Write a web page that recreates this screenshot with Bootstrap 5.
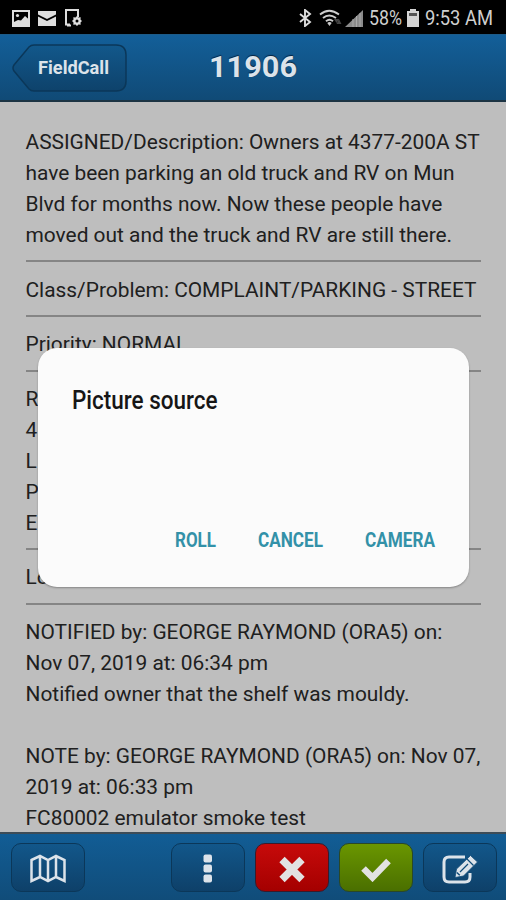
<!DOCTYPE html>
<html lang="en">
<head>
<meta charset="utf-8">
<meta name="viewport" content="width=device-width, initial-scale=1">
<title>11906</title>
<link href="https://cdn.jsdelivr.net/npm/bootstrap@5.3.0/dist/css/bootstrap.min.css" rel="stylesheet">
<style>
body{font-family:Roboto,"Liberation Sans",sans-serif;background:#bebebe;color:#202020}
.screen{height:900px;width:506px}
.status{height:34px;background:#000;color:#cfcfcf;font-size:18px;padding:2px 13px 0 12px}
.status svg{display:block;flex:none}
.fit{display:block;overflow:visible;flex:none}
.topbar{height:68px;background:linear-gradient(#135f99,#104a76);border-top:1px solid #1d5b88;border-bottom:2px solid #1c3443}
.heading{font-size:30px;font-weight:700;color:#dce3ea;text-shadow:0 -1px 1px #06223f}
.back{left:12px;top:9px;width:115px;height:48px}
.notes{padding:25.3px 25px 0 25.5px;font-size:20.9px;line-height:30.95px;overflow:hidden;min-height:0}
.entry{padding:0 0 9.4px;margin-bottom:12.3px;border-bottom:2px solid #858585}
.entry:last-child{border:0}
.entry div{white-space:nowrap;height:30.95px}
.toolbar{height:68px;background:linear-gradient(#125d95,#104c79);border-top:2px solid #3d4c57;padding:9px 9px 0 11px}
.key{width:74px;height:49px;border:1.5px solid #0b3759;border-radius:10px;background:linear-gradient(#12578a,#0e4069);padding:2px 0 0}
.key.red{background:linear-gradient(#c70a0a,#a40000);border-color:#3b1a2b}
.key.green{background:linear-gradient(#6a9600,#4a6f00);border-color:#2a4827}
.sheet{left:38px;top:348px;width:431px;height:239px;border-radius:19px;background:#fbfbfb;box-shadow:0 1px 2px rgba(0,0,0,.3);padding:37px 34px 34px}
.choice{font-size:20px;font-weight:700;fill:#3391a8}
</style>
<script src="https://cdn.jsdelivr.net/npm/bootstrap@5.3.0/dist/js/bootstrap.bundle.min.js"></script>
</head>
<body>
<div class="screen d-flex flex-column position-relative overflow-hidden">
<div class="status d-flex align-items-center justify-content-between flex-shrink-0">
  <div class="d-flex align-items-center">
    <svg width="18" height="17" viewBox="0 0 18 17"><rect x="1" y="1" width="16" height="15" fill="none" stroke="#ddd" stroke-width="2"/><circle cx="5.5" cy="5.5" r="1.6" fill="#ddd"/><path d="M2 12l4-2 3 .5 4-4.500 4 3.500V15H2z" fill="#ddd"/></svg>
    <svg class="ms-2" width="18" height="15" viewBox="0 0 18 15"><path d="M0 0h18v3.500L9 8 0 3.500zM0 5.500l9 4.500 9-4.500V15H0z" fill="#ddd"/></svg>
    <svg style="margin-left:9px" width="17" height="18" viewBox="0 0 17 18"><path d="M5 15.500H1V1h12v7" fill="none" stroke="#ddd" stroke-width="2"/><path d="M2 16.500h4" stroke="#ddd" stroke-width="2"/><path d="M12 7l1.500 1.500 2.200-.2-.2 2.200L17 12l-1.500 1.500.2 2.200-2.200-.2L12 17l-1.500-1.500-2.200.2.2-2.200L7 12l1.500-1.500-.2-2.200 2.200.2z" fill="#ddd"/><circle cx="12" cy="12" r="1.500" fill="#000"/></svg>
  </div>
  <div class="d-flex align-items-center">
    <svg width="13" height="18" viewBox="0 0 13 18"><path d="M1 5l10 8-5 4V1l5 4-10 8" fill="none" stroke="#ddd" stroke-width="1.900"/></svg>
    <svg style="margin-left:7px" width="24" height="18" viewBox="0 0 24 18"><g fill="none" stroke="#ccc" stroke-width="1.900"><path d="M1 5.500Q10-2 20 5.500M4 9q6-5 13 0M7 12.200q3.500-3 7 0"/></g><path d="M10.500 17l-2.200-3q2.200-1.800 4.400 0z" fill="#ccc"/><path d="M15 10l2.500 4L20 10zM17.500 15l2.500-5 2.500 5z" fill="#444"/></svg>
    <svg style="margin-left:2px" width="18" height="17" viewBox="0 0 18 17"><path d="M0 17L18 0v17z" fill="#8b8b8b"/><path d="M8 9v8M11.500 6v11M15 3v14" stroke="#aaa" stroke-width="1"/></svg>
    <svg class="fit" style="margin-left:6px" width="33" height="20"><text x="0" y="17" font-size="20" textLength="33" lengthAdjust="spacingAndGlyphs" fill="#cfcfcf">58%</text></svg>
    <svg style="margin-left:5px" width="12" height="18" viewBox="0 0 12 18"><path d="M3 0h6v2h3v16H0V2h3z" fill="#d4d4d4"/><path d="M2 4h8v3H2z" fill="#555"/></svg>
    <svg class="fit" style="margin-left:6px" width="68" height="20"><text x="0" y="17" font-size="20" textLength="68" lengthAdjust="spacingAndGlyphs" fill="#cfcfcf">9:53 AM</text></svg>
  </div>
</div>
<header class="topbar position-relative d-flex justify-content-center align-items-center flex-shrink-0">
  <svg class="back position-absolute" viewBox="0 0 115 48"><defs><linearGradient id="bk" x2="0" y2="1"><stop stop-color="#12588b"/><stop offset="1" stop-color="#0e426b"/></linearGradient></defs><path d="M22 1h82q10 0 10 10v26q0 10-10 10H22q-3 0-5-2L2 27q-2-3 0-6L17 3q2-2 5-2z" fill="url(#bk)" stroke="#0b3759" stroke-width="1.500"/><text x="26" y="30" font-size="18.500" font-weight="700" textLength="71" lengthAdjust="spacingAndGlyphs" fill="#dce3ea">FieldCall</text></svg>
  <svg class="fit heading" width="88" height="30"><text x="0" y="24" textLength="88" lengthAdjust="spacingAndGlyphs" fill="#dce3ea">11906</text></svg>
</header>
<main class="notes flex-grow-1">
  <div class="entry"><div>ASSIGNED/Description: Owners at 4377-200A ST</div><div>have been parking an old truck and RV on Mun</div><div>Blvd for months now. Now these people have</div><div>moved out and the truck and RV are still there.</div></div>
  <div class="entry"><div>Class/Problem: COMPLAINT/PARKING - STREET</div></div>
  <div class="entry"><div>Priority: NORMAL</div></div>
  <div class="entry"><div>R</div><div>4</div><div>L</div><div>P</div><div>E</div></div>
  <div class="entry"><div>Lo</div></div>
  <div class="entry"><div>NOTIFIED by: GEORGE RAYMOND (ORA5) on:</div><div>Nov 07, 2019 at: 06:34 pm</div><div>Notified owner that the shelf was mouldy.</div><div></div><div>NOTE by: GEORGE RAYMOND (ORA5) on: Nov 07,</div><div>2019 at: 06:33 pm</div><div>FC80002 emulator smoke test</div></div>
</main>
<footer class="toolbar d-flex justify-content-between align-items-start flex-shrink-0">
  <button class="key btn d-flex align-items-center justify-content-center" aria-label="Map"><svg width="36" height="29" viewBox="0 0 36 29"><path d="M1.500 6L10 2l8 4 8-4 8.500 4v21L26 23l-8 4-8-4-8.500 4zM10 2v21M18 6v21M26 2v21" fill="none" stroke="#dce3ea" stroke-width="2.500"/></svg></button>
  <div class="d-flex" style="gap:10px">
    <button class="key btn d-flex align-items-center justify-content-center" aria-label="More"><svg width="10" height="29" viewBox="0 0 10 29"><g fill="#dce3ea"><rect x=".5" y=".5" width="8.500" height="8" rx="2"/><rect x=".5" y="10.500" width="8.500" height="8" rx="2"/><rect x=".5" y="20.500" width="8.500" height="8" rx="2"/></g></svg></button>
    <button class="key red btn d-flex align-items-center justify-content-center" aria-label="Reject"><svg width="28" height="28" viewBox="0 0 28 28"><path d="M4 4.500l20 20M24 4.500L4 24.500" stroke="#e2e2e2" stroke-width="7.500"/></svg></button>
    <button class="key green btn d-flex align-items-center justify-content-center" aria-label="Accept"><svg width="32" height="26" viewBox="0 0 32 26"><path d="M3.500 12.500l9 9L28.500 5" fill="none" stroke="#e2e2e2" stroke-width="6.500"/></svg></button>
    <button class="key btn d-flex align-items-center justify-content-center" aria-label="Edit"><svg width="36" height="30" viewBox="0 0 36 30"><path d="M23 3H7Q2 3 2 8v15q0 5 5 5h16q5 0 5-5v-4" fill="none" stroke="#dce3ea" stroke-width="3"/><path d="M13 23.500l1.500-8.500L28.500 1.500l7 6.500-14 14z" fill="#dce3ea" stroke="#0f4b78" stroke-width=".8"/><path d="M25 5l6.500 6.500M18 18L26 10" stroke="#0f4b78" stroke-width="1.200"/><path d="M14.800 18.500l3 2.800" stroke="#0f4b78" stroke-width="1.500"/></svg></button>
  </div>
</footer>
<section class="sheet position-absolute d-flex flex-column justify-content-between" role="dialog">
  <svg class="fit" width="146" height="30"><text x="0" y="23.500" font-size="25" font-weight="500" textLength="145.500" lengthAdjust="spacingAndGlyphs" fill="#161616">Picture source</text></svg>
  <div class="d-flex justify-content-end">
    <svg class="fit choice" width="41" height="24"><text x="0" y="18" textLength="41" lengthAdjust="spacingAndGlyphs">ROLL</text></svg>
    <svg class="fit choice" style="margin-left:42px" width="65" height="24"><text x="0" y="18" textLength="65" lengthAdjust="spacingAndGlyphs">CANCEL</text></svg>
    <svg class="fit choice" style="margin-left:42px" width="70" height="24"><text x="0" y="18" textLength="70" lengthAdjust="spacingAndGlyphs">CAMERA</text></svg>
  </div>
</section>
</div>
</body>
</html>
